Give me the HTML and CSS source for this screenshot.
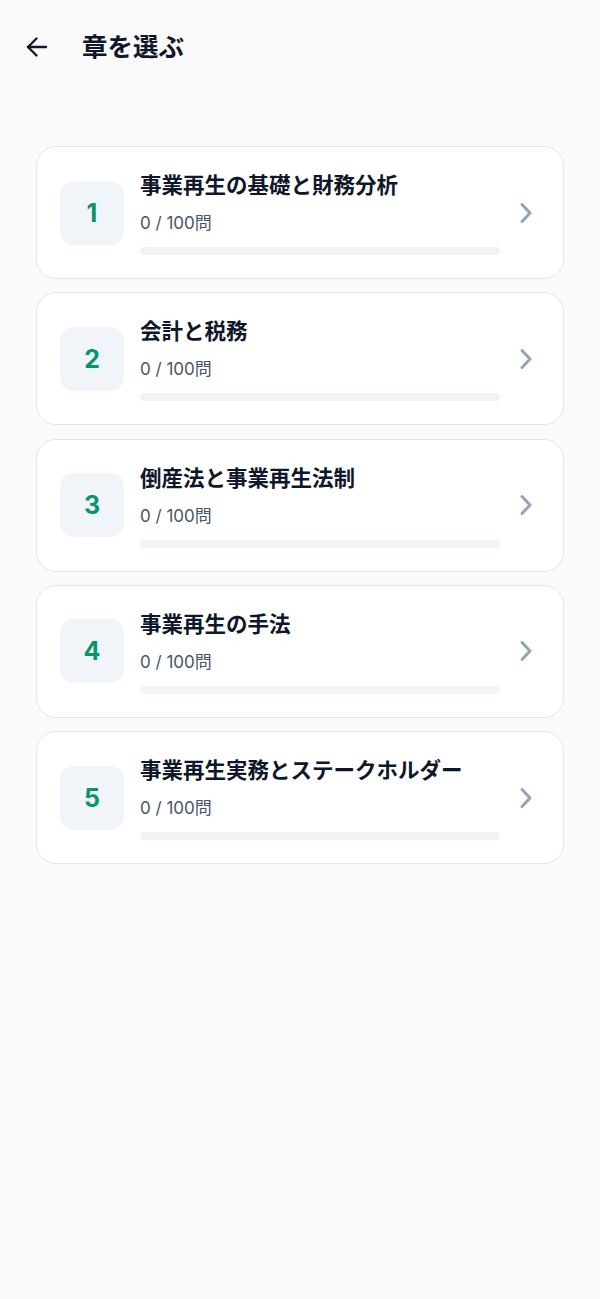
FILE: index.html
```html
<!DOCTYPE html>
<html lang="ja">
<head>
<meta charset="utf-8">
<title>章を選ぶ</title>
<link rel="stylesheet" href="styles.css">
</head>
<body>
<header class="header">
  <button class="back" aria-label="戻る">
    <svg width="24" height="24" viewBox="0 0 24 24" fill="none" stroke="#0f172a" stroke-width="2.4" stroke-linecap="round" stroke-linejoin="round"><path d="M22 12H4"/><path d="M12.5 3.5 4 12l8.5 8.5"/></svg>
  </button>
  <h1 class="title">章を選ぶ</h1>
</header>
<main class="list">
  <div class="card">
    <div class="num">1</div>
    <div class="body">
      <div class="ctitle">事業再生の基礎と財務分析</div>
      <div class="count">0 / 100問</div>
      <div class="bar"><div class="fill" style="width:0%"></div></div>
    </div>
    <svg class="chev" width="24" height="24" viewBox="0 0 24 24" fill="none" stroke="#94a3b8" stroke-width="3" stroke-linecap="round" stroke-linejoin="round"><path d="M6 3.5 14 12l-8 8.5"/></svg>
  </div>
  <div class="card">
    <div class="num">2</div>
    <div class="body">
      <div class="ctitle">会計と税務</div>
      <div class="count">0 / 100問</div>
      <div class="bar"><div class="fill" style="width:0%"></div></div>
    </div>
    <svg class="chev" width="24" height="24" viewBox="0 0 24 24" fill="none" stroke="#94a3b8" stroke-width="3" stroke-linecap="round" stroke-linejoin="round"><path d="M6 3.5 14 12l-8 8.5"/></svg>
  </div>
  <div class="card">
    <div class="num">3</div>
    <div class="body">
      <div class="ctitle">倒産法と事業再生法制</div>
      <div class="count">0 / 100問</div>
      <div class="bar"><div class="fill" style="width:0%"></div></div>
    </div>
    <svg class="chev" width="24" height="24" viewBox="0 0 24 24" fill="none" stroke="#94a3b8" stroke-width="3" stroke-linecap="round" stroke-linejoin="round"><path d="M6 3.5 14 12l-8 8.5"/></svg>
  </div>
  <div class="card">
    <div class="num">4</div>
    <div class="body">
      <div class="ctitle">事業再生の手法</div>
      <div class="count">0 / 100問</div>
      <div class="bar"><div class="fill" style="width:0%"></div></div>
    </div>
    <svg class="chev" width="24" height="24" viewBox="0 0 24 24" fill="none" stroke="#94a3b8" stroke-width="3" stroke-linecap="round" stroke-linejoin="round"><path d="M6 3.5 14 12l-8 8.5"/></svg>
  </div>
  <div class="card">
    <div class="num">5</div>
    <div class="body">
      <div class="ctitle">事業再生実務とステークホルダー</div>
      <div class="count">0 / 100問</div>
      <div class="bar"><div class="fill" style="width:0%"></div></div>
    </div>
    <svg class="chev" width="24" height="24" viewBox="0 0 24 24" fill="none" stroke="#94a3b8" stroke-width="3" stroke-linecap="round" stroke-linejoin="round"><path d="M6 3.5 14 12l-8 8.5"/></svg>
  </div>
</main>
</body>
</html>
```
FILE: styles.css
```css
* { box-sizing: border-box; }
html, body {
  margin: 0;
  padding: 0;
  background: #fafafa;
  font-family: "Inter", "Noto Sans CJK JP", sans-serif;
  color: #0f172a;
}
body { min-height: 1299px; }
.header {
  height: 94px;
  display: flex;
  align-items: center;
  padding-left: 24px;
  gap: 34px;
}
.back {
  border: 0;
  background: none;
  padding: 0;
  margin: 0;
  width: 24px;
  height: 24px;
  display: flex;
}
.title {
  margin: 0;
  font-size: 25.5px;
  font-weight: 700;
  line-height: 34px;
  color: #0f172a;
}
.list {
  margin-top: 52px;
  padding: 0 36px;
  display: flex;
  flex-direction: column;
  gap: 13.3px;
}
.card {
  background: #fff;
  border: 1px solid #e2e5ea;
  border-radius: 20px;
  padding: 23px;
  display: flex;
  align-items: center;
  gap: 16px;
}
.num {
  flex: none;
  width: 64px;
  height: 64px;
  border-radius: 14px;
  background: #f1f5f9;
  display: flex;
  align-items: center;
  justify-content: center;
  color: #059669;
  font-family: "Inter", sans-serif;
  font-size: 25px;
  font-weight: 700;
}
.body {
  flex: 1;
  min-width: 0;
  display: flex;
  flex-direction: column;
}
.ctitle {
  font-size: 21.5px;
  font-weight: 700;
  line-height: 31px;
  color: #0f172a;
  white-space: nowrap;
}
.count {
  margin-top: 10px;
  font-size: 17px;
  line-height: 24px;
  color: #475569;
}
.bar {
  margin-top: 12px;
  height: 8px;
  border-radius: 4px;
  background: #f1f4f7;
  overflow: hidden;
}
.fill {
  height: 100%;
  background: #059669;
}
.chev { flex: none; }
```
